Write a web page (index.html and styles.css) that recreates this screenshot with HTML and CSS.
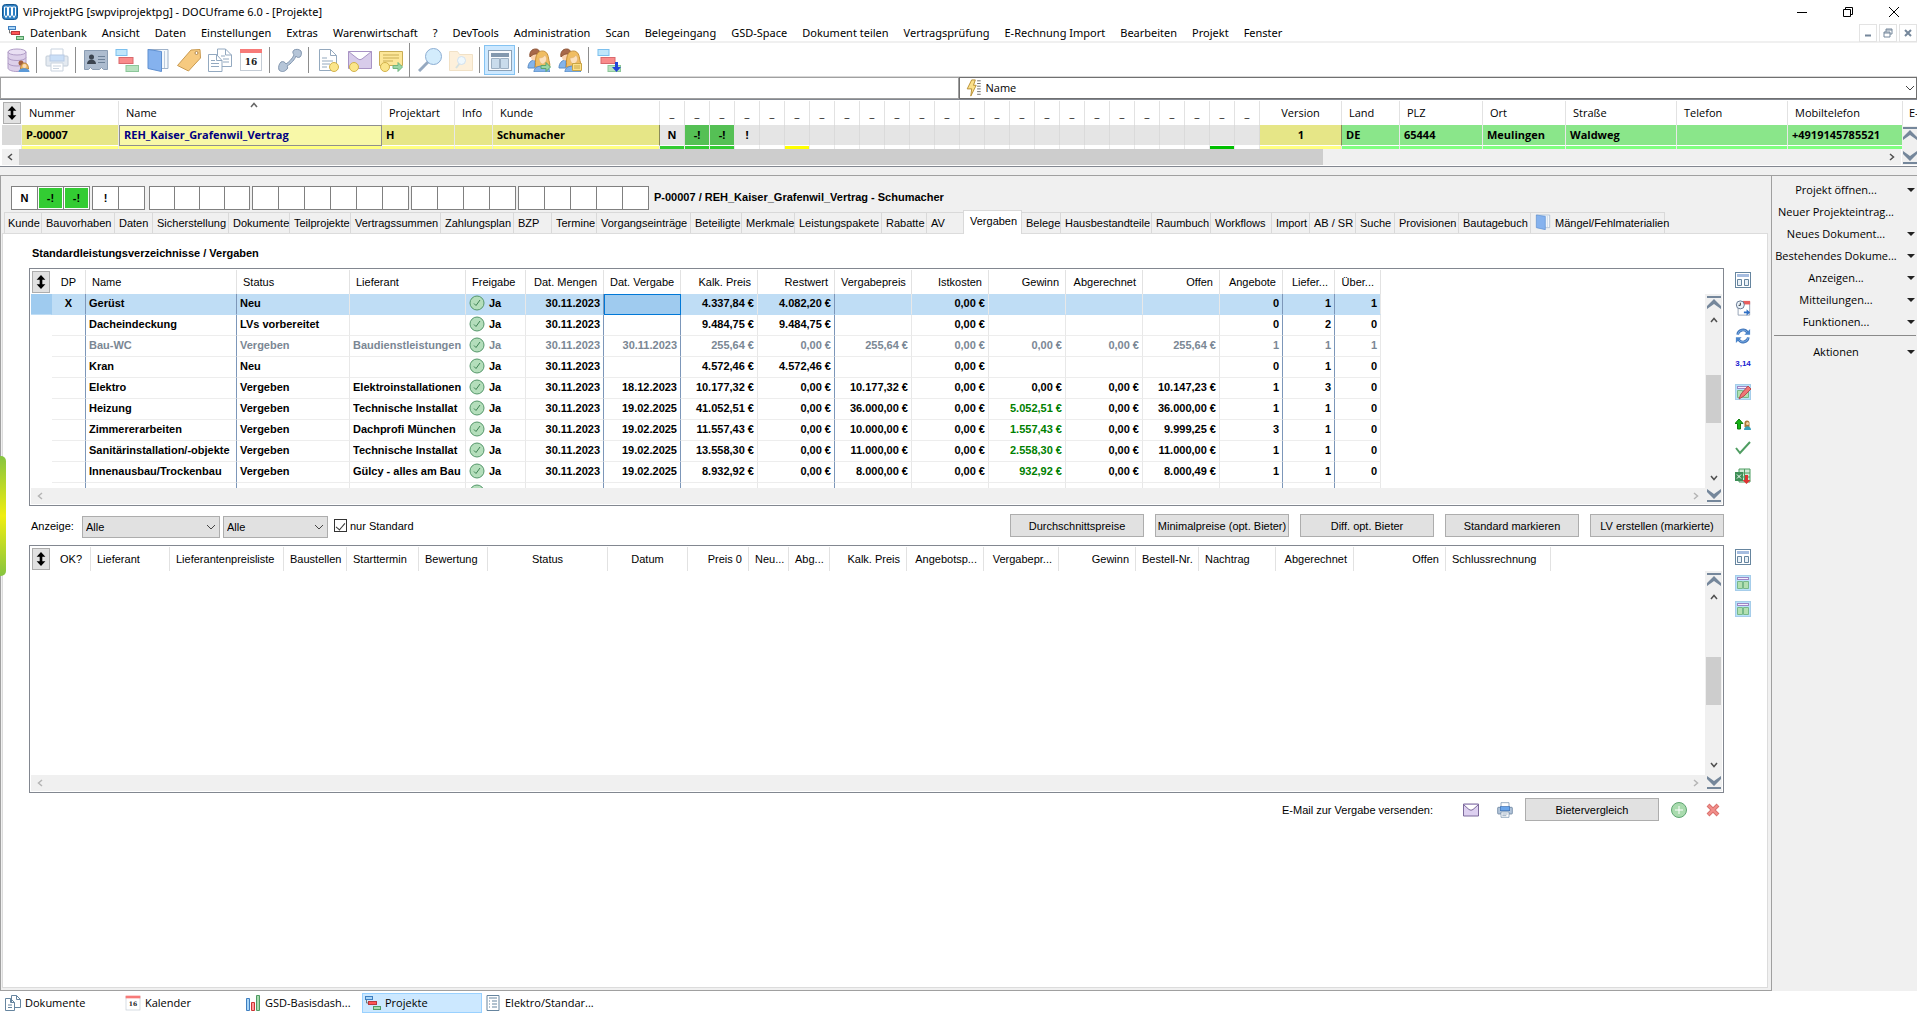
FILE: index.html
```html
<!DOCTYPE html>
<html lang="de">
<head>
<meta charset="utf-8">
<title>ViProjektPG [swpviprojektpg] - DOCUframe 6.0 - [Projekte]</title>
<link rel="stylesheet" href="styles.css">
</head>
<body>
<svg class="sprite" aria-hidden="true">
  <symbol id="i-app" viewBox="0 0 16 16"><rect x=".5" y=".5" width="15" height="15" rx="3" fill="#2e7fc2" stroke="#14568f"/><path d="M2.500 3h3v8l-1.500 2.500L2.500 11zM6.500 3h3v8L8 13.500 6.500 11zM10.500 3h3v8L12 13.500 10.500 11z" fill="#2e7fc2" stroke="#fff" stroke-width="1"/></symbol>
  <symbol id="i-gantt" viewBox="0 0 24 24"><rect x="1" y="1.500" width="11" height="6" fill="#bfe6fb" stroke="#7cc0ee"/><rect x="4" y="9.500" width="14" height="6" fill="#f98b8b" stroke="#d9696d"/><rect x="11" y="17.500" width="12.500" height="6" fill="#b7e2bf" stroke="#8cc79a"/></symbol>
  <symbol id="i-gantts" viewBox="0 0 16 16"><rect x=".5" y="1.500" width="7" height="3" fill="#a9d6f8" stroke="#3f7fc0"/><path d="M1.500 5v3h2" fill="none" stroke="#777"/><rect x="3.500" y="6.500" width="8" height="3" fill="#f55" stroke="#b8383c"/><rect x="8.500" y="11.500" width="7" height="3" fill="#a6dcae" stroke="#4f9a63"/></symbol>
  <symbol id="i-people" viewBox="0 0 24 24"><path d="M1 20c0-5 3-8 7-8v8z" fill="#84b4ea" stroke="#5a8cc4"/><circle cx="7.500" cy="9" r="3.500" fill="#fbd3b0"/><path d="M3 9c-1-5 2-8 5.500-8S13 3 12 7C9 5 6 6 3 9z" fill="#a8694a" stroke="#8d5335"/><path d="M8 19c1-2 0-6 1-10 1-4 3-6 6.500-6S21 6 21.500 10s2 6 1 9z" fill="#f0bd62" stroke="#c48d38"/><path d="M12 10c3 0 5-1 6-3 1 2 2 3 1.500 5S17 16 15.500 16 12 13 12 10z" fill="#fde0bc" stroke="#d9a86a" stroke-width=".5"/><path d="M7 24c0-4 3-6 8.500-6s7 2 7 6z" fill="#84b4ea" stroke="#5a8cc4"/></symbol>
  <symbol id="i-db" viewBox="0 0 24 24"><path d="M2 4v16c0 2 4 3.500 9 3.500s9-1.500 9-3.500V4z" fill="#ddd0ea" stroke="#b09cc6"/><ellipse cx="11" cy="4" rx="9" ry="3" fill="#e9dff3" stroke="#b09cc6"/><path d="M2 9.500c1 4 17 4 18 0M2 15c1 4 17 4 18 0" fill="none" stroke="#b09cc6"/><circle cx="15" cy="15" r="2.500" fill="#a5603e"/><path d="M14.500 21c0-8 8-8 8 0z" fill="#eeb95c" stroke="#b9803a"/><circle cx="18.500" cy="18" r="2" fill="#fbdcb8"/><path d="M12.500 24c0-5 11-5 11 0z" fill="#5c9ad8"/></symbol>
  <symbol id="i-print" viewBox="0 0 24 24"><path d="M6 9V1h12v8" fill="#fff" stroke="#6a87a5"/><rect x="1" y="8" width="22" height="10" rx="1" fill="#b3c5da" stroke="#54718f"/><rect x="5" y="7" width="14" height="6" fill="#6aa5ea" stroke="#3a6fb5"/><path d="M6 15h12v8H6zM8 18h8M8 20.500h6" fill="#fff" stroke="#6a87a5"/></symbol>
  <symbol id="i-card" viewBox="0 0 24 24"><path d="M.5 2.500h23v19h-4l-2-2-2 2h-7l-2-2-2 2h-4z" fill="#adbccf" stroke="#8b9db3"/><circle cx="7.500" cy="9" r="2.500" fill="#3b4450"/><path d="M3 16c0-6 9-6 9 0z" fill="#3b4450"/><path d="M14 8.500h7M14 11.500h7M14 14.500h7" stroke="#6d8198"/></symbol>
  <symbol id="i-book" viewBox="0 0 24 24"><path d="M2 1.500h20v19h-6z" fill="#f4f8fc" stroke="#9fb2c9"/><path d="M18.500 3v17" stroke="#bccbdd"/><path d="M2 1.500l13.500 2v20L2 20.500z" fill="#85b2ee" stroke="#5e8fd0"/></symbol>
  <symbol id="i-tag" viewBox="0 0 24 24"><path d="M14 2l9-.5.5 8.500L11.500 23 .5 17.500z" fill="#f6ca80" stroke="#c99a50"/><circle cx="19.500" cy="5" r="1.500" fill="#fff" stroke="#b08850"/></symbol>
  <symbol id="i-docs" viewBox="0 0 24 24"><g fill="#fff" stroke="#93a9c0"><path d="M9.500 1h8l6 6v11.500h-14z"/><path d="M17.500 1v6h6" fill="none"/><path d="M13 8h4M15 11h6M15 14h6"/><path d="M.5 6.500h8l5.500 6v11H.5z"/><path d="M8.500 6.500v6h5.500" fill="none"/><path d="M3 12.500h4M3 15.500h8M3 18.500h8"/></g></symbol>
  <symbol id="i-cal" viewBox="0 0 24 24"><rect x="1.500" y="2" width="21" height="20.500" fill="#fff" stroke="#c4ccd5"/><path d="M1 1h22v4H1z" fill="#f77a78"/><text x="12" y="17" text-anchor="middle" class="cal-num">16</text></symbol>
  <symbol id="i-phone" viewBox="0 0 24 24"><path d="M1 22c-1-3 0-6 2-8 2-1 4 0 5 2 3-2 6-5 8-9-1-2-2-3 0-5 2-1 5-1 7 1 1 3 0 5-1 6-2 1-4 0-4-1-1 3-5 8-9 10 1 1 1 3-1 4-2 2-5 2-7 0z" fill="#b5c5d8" stroke="#8296af"/></symbol>
  <symbol id="i-doccoin" viewBox="0 0 24 24"><path d="M2.500 1.500h11l6 6v15h-17zM13.500 1.500v6h6M5 10h5M5 13h11M5 16h8M5 19h5" fill="#fff" stroke="#94a9be"/><circle cx="17" cy="19" r="4.500" fill="#fbe68b" stroke="#d2b24c"/></symbol>
  <symbol id="i-mailcoin" viewBox="0 0 24 24"><path d="M.5 3.500h23v17H.5zM.5 3.500L10 11q2 1.500 4 0l9.500-7.500" fill="#d8ccea" stroke="#a893c4"/><circle cx="6" cy="19" r="4.500" fill="#fbe68b" stroke="#d2b24c"/></symbol>
  <symbol id="i-notecoin" viewBox="0 0 24 24"><path d="M.5 3.500h23v14H.5zM4 7h16M4 10h16M4 13h10" fill="#fde799" stroke="#c9ad55"/><circle cx="6" cy="19" r="4.500" fill="#fbe68b" stroke="#d2b24c"/><path d="M14 17.500h5v-3l4.500 4.500-4.500 4.500v-3h-5z" fill="#9bd6a6" stroke="#6fb57e"/></symbol>
  <symbol id="i-lens" viewBox="0 0 24 24"><path d="M10 14L1 23" stroke="#96a9c0" stroke-width="3"/><circle cx="15.500" cy="8.500" r="8" fill="#d3ecfc" stroke="#8cadd2"/></symbol>
  <symbol id="i-folder" viewBox="0 0 24 24"><path d="M.5 3.500h8l2 3h13v16H.500z" fill="#fad79a" stroke="#d9aa5e"/><path d="M11 15l-4 5" stroke="#8aa" stroke-width="2"/><circle cx="12.500" cy="12.500" r="4" fill="#d3ecfc" stroke="#7ea9cf"/></symbol>
  <symbol id="i-form" viewBox="0 0 24 24"><rect x=".5" y="2.500" width="23" height="20" fill="#f7fafd" stroke="#8ba1b6"/><path d="M3 5h18v4H3z" fill="#8298ae"/><path d="M3.500 10.500h8v10h-8zM12.500 10.500h8v10h-8z" fill="#c9dcec" stroke="#9cb0c3"/></symbol>
  <symbol id="i-forms" viewBox="0 0 16 16"><rect x=".5" y=".5" width="15" height="15" fill="#fff" stroke="#66859f"/><path d="M2 2h12v3H2z" fill="#a6bde0"/><path d="M2.500 7.500h4v6h-4zM9.500 7.500h4v6h-4z" fill="#eaf1f7" stroke="#66859f"/></symbol>
  <symbol id="i-formg" viewBox="0 0 16 16"><rect x=".5" y=".5" width="15" height="15" fill="#b9e2f8" stroke="#a6cdea"/><rect x="2.500" y="2.500" width="11" height="2" fill="#f7effc" stroke="#9c86c4"/><path d="M2.500 6.500h5v7h-5zM8.500 6.500h5v7h-5z" fill="#b3e0b1" stroke="#77b98a"/></symbol>
  <symbol id="i-bolt" viewBox="0 0 16 20"><path d="M6 1h4L8 7h3L5 19l1-8H1z" fill="#fbe08a" stroke="#b48a2c"/><path d="M12 2h4M12 5h4M12 8h4M12 11h4M12 14h4M12 17h4" stroke="#666"/></symbol>
  <symbol id="i-sort" viewBox="0 0 12 16"><path d="M6 0l5 5.500H7.500v5H11L6 16l-5-5.500h3.500v-5H1z" fill="#000"/></symbol>
  <symbol id="i-ok" viewBox="0 0 16 16"><circle cx="8" cy="8" r="7" fill="#b4debb" stroke="#55976a"/><path d="M5 8.500l2 2 4-5.500" fill="none" stroke="#3f8254"/></symbol>
  <symbol id="i-top" viewBox="0 0 16 16"><path d="M1 1h14v2H1z" fill="#75879b"/><path d="M1 14v-3l7-7 7 7v3l-7-5z" fill="#75879b"/></symbol>
  <symbol id="i-bottom" viewBox="0 0 16 16"><path d="M1 13h14v2H1z" fill="#75879b"/><path d="M1 2v3l7 7 7-7V2L8 7z" fill="#75879b"/></symbol>
  <symbol id="i-chev" viewBox="0 0 8 8"><path d="M1 2l3 3.500L7 2" fill="none" stroke="currentColor" stroke-width="1.500"/></symbol>
  <symbol id="i-drop" viewBox="0 0 10 10"><path d="M1 3l4 4 4-4" fill="none" stroke="#444"/></symbol>
  <symbol id="i-sched" viewBox="0 0 16 18"><path d="M2.500 2h13v15h-13z" fill="#fff" stroke="#8c9bb0"/><path d="M8 1h8v4H8z" fill="#e85d5d"/><circle cx="5" cy="5.500" r="4.500" fill="#eaf3fb" stroke="#5a6c88"/><path d="M5 3v3H3" fill="none" stroke="#222"/><path d="M9 13h3v-2.500l4 3.500-4 3.500V15H9z" fill="#2f6fc4"/></symbol>
  <symbol id="i-sync" viewBox="0 0 16 18"><path d="M2 7.500a6 6 0 0 1 11-2.500M14 10.500a6 6 0 0 1-11 2.500" fill="none" stroke="#3f74b8" stroke-width="3"/><path d="M2 7.500a6 6 0 0 1 11-2.500M14 10.500a6 6 0 0 1-11 2.500" fill="none" stroke="#7fb2ea"/><path d="M9.500 7.500H16V1zM6.500 10.500H0V17z" fill="#4b86cc"/></symbol>
  <symbol id="i-edit" viewBox="0 0 16 16"><use href="#i-formg"/><path d="M4 15l2-5 7-8 3 3-7 7z" fill="#f07575" stroke="#b84a52"/></symbol>
  <symbol id="i-upuser" viewBox="0 0 16 12"><path d="M4 1l4 4.500H5.500V11h-3V5.500H0z" fill="#14b514" stroke="#0b7d0b"/><path d="M9.500 9V5a2.500 2.500 0 0 1 5 0v4z" fill="#a87838"/><circle cx="12.500" cy="5.500" r="1.500" fill="#f6cfa0"/><path d="M9 12c0-5 7-5 7 0z" fill="#38a0b8"/></symbol>
  <symbol id="i-check" viewBox="0 0 16 14"><path d="M1 7l4 5L15 1" fill="none" stroke="#4f9d62" stroke-width="2"/></symbol>
  <symbol id="i-xls" viewBox="0 0 16 16"><path d="M4 1h11v13H4zM4 5h11M4 9h11M9.500 1v13" fill="#cfead5" stroke="#4f9d62"/><path d="M0 4h8v9H0z" fill="#3f8f58"/><path d="M2 6.500l4 4M6 6.500l-4 4" stroke="#fff"/><path d="M10 7h3v5h2.500l-4 4-4-4H10z" fill="#d33"/></symbol>
  <symbol id="i-mail" viewBox="0 0 16 14"><path d="M.5 1h15v12H.5zM1 2l5 4.500q2 1.500 4 0L15 2" fill="#ddd0f0" stroke="#7d6a9c"/></symbol>
  <symbol id="i-plus" viewBox="0 0 16 16"><circle cx="8" cy="8" r="7.500" fill="#a9dbae" stroke="#5fa572"/><path d="M8 4v8M4 8h8" stroke="#fff"/></symbol>
  <symbol id="i-del" viewBox="0 0 16 16"><path d="M3 3l10 10M13 3L3 13" stroke="#d9706c" stroke-width="4"/><path d="M3.500 3.500l9 9M12.500 3.500l-9 9" stroke="#f28f8b" stroke-width="2"/></symbol>
  <symbol id="i-bars" viewBox="0 0 16 16"><path d="M1.500 3.500h3v12h-3z" fill="#a9d6f8" stroke="#3f7fc0"/><path d="M6.500 7.500h3v8h-3z" fill="#f99" stroke="#c33"/><path d="M11.500.5h3v15h-3z" fill="#a6dcae" stroke="#4f9a63"/></symbol>
  <symbol id="i-lines" viewBox="0 0 16 16"><path d="M2 .5h12v15H2zM4 3h8M4 6h1M7 6h5M4 9h1M7 9h5M4 12h1M7 12h5" fill="#fff" stroke="#66859f"/></symbol>
  <symbol id="i-pages" viewBox="0 0 16 16"><g fill="#fff" stroke="#66859f"><path d="M6.500.5h5l4 4v8h-9zM11.500.5v4h4"/><path d="M.5 3.500h5l4 4v8h-9zM5.500 3.500v4h4M3 10h4M3 12.500h4"/></g></symbol>
</svg>

<header class="titlebar">
  <svg class="ic16"><use href="#i-app"/></svg>
  <h1>ViProjektPG [swpviprojektpg] - DOCUframe 6.0 - [Projekte]</h1>
  <div class="winctl">
    <button aria-label="Minimieren"><svg viewBox="0 0 12 12"><path d="M1 6.500h10" stroke="#000"/></svg></button>
    <button aria-label="Wiederherstellen"><svg viewBox="0 0 12 12"><path d="M1.500 3.500h7v7h-7zM3.500 3.500v-2h7v7h-2" fill="none" stroke="#000"/></svg></button>
    <button aria-label="Schließen"><svg viewBox="0 0 12 12"><path d="M1 1l10 10M11 1L1 11" stroke="#000"/></svg></button>
  </div>
</header>

<nav class="menubar">
  <svg class="ic16"><use href="#i-gantts"/></svg>
  <ul>
    <li><a href="#">Datenbank</a></li><li><a href="#">Ansicht</a></li><li><a href="#">Daten</a></li><li><a href="#">Einstellungen</a></li><li><a href="#">Extras</a></li><li><a href="#">Warenwirtschaft</a></li><li><a href="#">?</a></li><li><a href="#">DevTools</a></li><li><a href="#">Administration</a></li><li><a href="#">Scan</a></li><li><a href="#">Belegeingang</a></li><li><a href="#">GSD-Space</a></li><li><a href="#">Dokument teilen</a></li><li><a href="#">Vertragsprüfung</a></li><li><a href="#">E-Rechnung Import</a></li><li><a href="#">Bearbeiten</a></li><li><a href="#">Projekt</a></li><li><a href="#">Fenster</a></li>
  </ul>
  <div class="mdictl">
    <button aria-label="Fenster minimieren"><svg viewBox="0 0 10 10"><path d="M2 7.500h6" stroke="#75879b" stroke-width="2"/></svg></button>
    <button aria-label="Fenster wiederherstellen"><svg viewBox="0 0 10 10"><path d="M3 4V1h6v5H7M1 4h6v5H1zM1 5h6M3 2h6" fill="none" stroke="#75879b"/></svg></button>
    <button aria-label="Fenster schließen"><svg viewBox="0 0 10 10"><path d="M2 2l6 6M8 2L2 8" stroke="#75879b" stroke-width="2"/></svg></button>
  </div>
</nav>

<div class="toolbar">
  <button aria-label="Datenbank"><svg><use href="#i-db"/></svg></button><i></i>
  <button aria-label="Drucken" disabled><svg><use href="#i-print"/></svg></button><i></i>
  <button aria-label="Adressen"><svg><use href="#i-card"/></svg></button>
  <button aria-label="Projekte"><svg><use href="#i-gantt"/></svg></button>
  <button aria-label="Buch"><svg><use href="#i-book"/></svg></button>
  <button aria-label="Artikel"><svg><use href="#i-tag"/></svg></button>
  <button aria-label="Dokumente"><svg><use href="#i-docs"/></svg></button>
  <button aria-label="Kalender"><svg><use href="#i-cal"/></svg></button><i></i>
  <button aria-label="Telefon"><svg><use href="#i-phone"/></svg></button><i></i>
  <button aria-label="Neues Dokument"><svg><use href="#i-doccoin"/></svg></button>
  <button aria-label="Neue E-Mail"><svg><use href="#i-mailcoin"/></svg></button>
  <button aria-label="Neue Notiz"><svg><use href="#i-notecoin"/></svg></button><i class="tall"></i>
  <button aria-label="Suchen"><svg><use href="#i-lens"/></svg></button>
  <button aria-label="Ordner durchsuchen" disabled><svg><use href="#i-folder"/></svg></button><i></i>
  <button class="on" aria-label="Detailansicht"><svg><use href="#i-form"/></svg></button><i></i>
  <button aria-label="Benutzer wechseln"><svg><use href="#i-people"/><path d="M14 17.500h5v-3l4.500 4.500-4.500 4.500v-3h-5z" fill="#9bd6a6" stroke="#5ba56c"/></svg></button>
  <button aria-label="Benutzernotiz"><svg><use href="#i-people"/><path d="M14.500 15.500h9v7h-9zM16 18h6M16 20h6" fill="#fde08a" stroke="#c9a545"/></svg></button><i></i>
  <button aria-label="Projekt laden"><svg><use href="#i-gantt"/><path d="M18 14h3v5h3l-4.500 5L15 19h3z" fill="#2343d8"/></svg></button>
</div>

<div class="searchbar">
  <input type="text" aria-label="Suchbegriff">
  <div class="sortby"><svg class="bolt"><use href="#i-bolt"/></svg><select aria-label="Suchfeld"><option>Name</option></select><svg class="ic10"><use href="#i-drop"/></svg></div>
</div>

<section class="projects">
  <table class="grid">
    <colgroup><col class="w20"><col class="w97"><col class="w263"><col class="w73"><col class="w38"><col class="w167"><col class="w25" span="24"><col class="w82"><col class="w58"><col class="w83"><col class="w83"><col class="w111"><col class="w111"><col class="w115"><col class="w83"></colgroup>
    <thead><tr><th class="corner"><button aria-label="Sortieren"><svg><use href="#i-sort"/></svg></button></th><th>Nummer</th><th class="sorted">Name<svg class="ic8 caret"><use href="#i-chev"/></svg></th><th>Projektart</th><th>Info</th><th>Kunde</th><th class="d">_</th><th class="d">_</th><th class="d">_</th><th class="d">_</th><th class="d">_</th><th class="d">_</th><th class="d">_</th><th class="d">_</th><th class="d">_</th><th class="d">_</th><th class="d">_</th><th class="d">_</th><th class="d">_</th><th class="d">_</th><th class="d">_</th><th class="d">_</th><th class="d">_</th><th class="d">_</th><th class="d">_</th><th class="d">_</th><th class="d">_</th><th class="d">_</th><th class="d">_</th><th class="d">_</th><th class="c">Version</th><th>Land</th><th>PLZ</th><th>Ort</th><th>Straße</th><th>Telefon</th><th>Mobiltelefon</th><th>E-Mail</th></tr></thead>
    <tbody>
      <tr><td class="rh"></td><td class="y">P-00007</td><td class="cur">REH_Kaiser_Grafenwil_Vertrag</td><td class="y">H</td><td class="y"></td><td class="y k">Schumacher</td><td class="s">N</td><td class="s g">-!</td><td class="s g">-!</td><td class="s">!</td><td class="s"></td><td class="s"></td><td class="s"></td><td class="s"></td><td class="s"></td><td class="s"></td><td class="s"></td><td class="s"></td><td class="s"></td><td class="s"></td><td class="s"></td><td class="s"></td><td class="s"></td><td class="s"></td><td class="s"></td><td class="s"></td><td class="s"></td><td class="s"></td><td class="s"></td><td class="s"></td><td class="y c k">1</td><td class="a">DE</td><td class="a">65444</td><td class="a">Meulingen</td><td class="a">Waldweg</td><td class="a"></td><td class="a">+4919145785521</td><td></td></tr>
      <tr class="next"><td></td><td class="y"></td><td class="y"></td><td class="y"></td><td class="y"></td><td class="y"></td><td class="g"></td><td class="g"></td><td class="g"></td><td></td><td></td><td class="yy"></td><td></td><td></td><td></td><td></td><td></td><td></td><td></td><td></td><td></td><td></td><td></td><td></td><td></td><td></td><td></td><td></td><td class="gg"></td><td></td><td class="y"></td><td class="a"></td><td class="a"></td><td class="a"></td><td class="a"></td><td class="a"></td><td class="a"></td><td></td></tr>
    </tbody>
  </table>
  <div class="hscroll live"><svg class="ic8 left"><use href="#i-chev"/></svg><b></b><svg class="ic8 right"><use href="#i-chev"/></svg></div>
  <div class="jump"><svg class="ic16"><use href="#i-top"/></svg><svg class="ic16"><use href="#i-bottom"/></svg></div>
</section>

<main class="detail">
  <div class="sidegrip"></div>
  <section class="project">
    <div class="flags">
      <div class="fg"><span>N</span><span class="g">-!</span><span class="g">-!</span></div>
      <div class="fg"><span>!</span><span></span></div>
      <div class="fg wide"><span></span><span></span><span></span><span></span></div>
      <div class="fg"><span></span><span></span><span></span><span></span><span></span><span></span></div>
      <div class="fg"><span></span><span></span><span></span><span></span></div>
      <div class="fg"><span></span><span></span><span></span><span></span><span></span></div>
      <h2>P-00007 / REH_Kaiser_Grafenwil_Vertrag - Schumacher</h2>
    </div>
    <nav class="tabs">
      <a href="#">Kunde</a><a href="#">Bauvorhaben</a><a href="#">Daten</a><a href="#">Sicherstellung</a><a href="#">Dokumente</a><a href="#">Teilprojekte</a><a href="#">Vertragssummen</a><a href="#">Zahlungsplan</a><a href="#">BZP</a><a href="#">Termine</a><a href="#">Vorgangseinträge</a><a href="#">Beteiligte</a><a href="#">Merkmale</a><a href="#">Leistungspakete</a><a href="#">Rabatte</a><a href="#">AV</a><a href="#" class="on">Vergaben</a><a href="#">Belege</a><a href="#">Hausbestandteile</a><a href="#">Raumbuch</a><a href="#">Workflows</a><a href="#">Import</a><a href="#">AB / SR</a><a href="#">Suche</a><a href="#">Provisionen</a><a href="#">Bautagebuch</a><a href="#"><svg class="ic16"><use href="#i-book"/></svg>Mängel/Fehlmaterialien</a>
    </nav>
    <div class="page">
      <h3>Standardleistungsverzeichnisse / Vergaben</h3>
      <div class="split">
        <div class="list">
          <div class="view upper">
            <table class="grid awards">
              <colgroup><col class="w21"><col class="w34"><col class="w151"><col class="w113"><col class="w116"><col class="w60"><col class="w78"><col class="w77" span="8"><col class="w63"><col class="w52"><col class="w46"></colgroup>
              <thead><tr><th class="corner"><button aria-label="Sortieren"><svg><use href="#i-sort"/></svg></button></th><th class="c">DP</th><th>Name</th><th>Status</th><th>Lieferant</th><th>Freigabe</th><th>Dat. Mengen</th><th>Dat. Vergabe</th><th>Kalk. Preis</th><th>Restwert</th><th>Vergabepreis</th><th>Istkosten</th><th>Gewinn</th><th>Abgerechnet</th><th>Offen</th><th>Angebote</th><th>Liefer...</th><th>Über...</th></tr></thead>
              <tbody>
                <tr class="sel"><td></td><td>X</td><td>Gerüst</td><td>Neu</td><td></td><td><svg class="ic16"><use href="#i-ok"/></svg>Ja</td><td>30.11.2023</td><td class="focus"></td><td>4.337,84 €</td><td>4.082,20 €</td><td></td><td>0,00 €</td><td></td><td></td><td></td><td>0</td><td>1</td><td>1</td></tr>
                <tr><td></td><td></td><td>Dacheindeckung</td><td>LVs vorbereitet</td><td></td><td><svg class="ic16"><use href="#i-ok"/></svg>Ja</td><td>30.11.2023</td><td></td><td>9.484,75 €</td><td>9.484,75 €</td><td></td><td>0,00 €</td><td></td><td></td><td></td><td>0</td><td>2</td><td>0</td></tr>
                <tr class="off"><td></td><td></td><td>Bau-WC</td><td>Vergeben</td><td><span>Baudienstleistungen</span></td><td><svg class="ic16"><use href="#i-ok"/></svg>Ja</td><td>30.11.2023</td><td>30.11.2023</td><td>255,64 €</td><td>0,00 €</td><td>255,64 €</td><td>0,00 €</td><td>0,00 €</td><td>0,00 €</td><td>255,64 €</td><td>1</td><td>1</td><td>1</td></tr>
                <tr><td></td><td></td><td>Kran</td><td>Neu</td><td></td><td><svg class="ic16"><use href="#i-ok"/></svg>Ja</td><td>30.11.2023</td><td></td><td>4.572,46 €</td><td>4.572,46 €</td><td></td><td>0,00 €</td><td></td><td></td><td></td><td>0</td><td>1</td><td>0</td></tr>
                <tr><td></td><td></td><td>Elektro</td><td>Vergeben</td><td><span>Elektroinstallationen</span></td><td><svg class="ic16"><use href="#i-ok"/></svg>Ja</td><td>30.11.2023</td><td>18.12.2023</td><td>10.177,32 €</td><td>0,00 €</td><td>10.177,32 €</td><td>0,00 €</td><td>0,00 €</td><td>0,00 €</td><td>10.147,23 €</td><td>1</td><td>3</td><td>0</td></tr>
                <tr><td></td><td></td><td>Heizung</td><td>Vergeben</td><td><span>Technische Installat</span></td><td><svg class="ic16"><use href="#i-ok"/></svg>Ja</td><td>30.11.2023</td><td>19.02.2025</td><td>41.052,51 €</td><td>0,00 €</td><td>36.000,00 €</td><td>0,00 €</td><td class="plus">5.052,51 €</td><td>0,00 €</td><td>36.000,00 €</td><td>1</td><td>1</td><td>0</td></tr>
                <tr><td></td><td></td><td>Zimmererarbeiten</td><td>Vergeben</td><td><span>Dachprofi München</span></td><td><svg class="ic16"><use href="#i-ok"/></svg>Ja</td><td>30.11.2023</td><td>19.02.2025</td><td>11.557,43 €</td><td>0,00 €</td><td>10.000,00 €</td><td>0,00 €</td><td class="plus">1.557,43 €</td><td>0,00 €</td><td>9.999,25 €</td><td>3</td><td>1</td><td>0</td></tr>
                <tr><td></td><td></td><td><span>Sanitärinstallation/-objekte</span></td><td>Vergeben</td><td><span>Technische Installat</span></td><td><svg class="ic16"><use href="#i-ok"/></svg>Ja</td><td>30.11.2023</td><td>19.02.2025</td><td>13.558,30 €</td><td>0,00 €</td><td>11.000,00 €</td><td>0,00 €</td><td class="plus">2.558,30 €</td><td>0,00 €</td><td>11.000,00 €</td><td>1</td><td>1</td><td>0</td></tr>
                <tr><td></td><td></td><td><span>Innenausbau/Trockenbau</span></td><td>Vergeben</td><td><span>Gülcy - alles am Bau</span></td><td><svg class="ic16"><use href="#i-ok"/></svg>Ja</td><td>30.11.2023</td><td>19.02.2025</td><td>8.932,92 €</td><td>0,00 €</td><td>8.000,00 €</td><td>0,00 €</td><td class="plus">932,92 €</td><td>0,00 €</td><td>8.000,49 €</td><td>1</td><td>1</td><td>0</td></tr>
                <tr><td></td><td></td><td></td><td></td><td></td><td><svg class="ic16"><use href="#i-ok"/></svg></td><td></td><td></td><td></td><td></td><td></td><td></td><td></td><td></td><td></td><td></td><td></td><td></td></tr>
              </tbody>
            </table>
          </div>
          <div class="vscroll"><svg class="ic16"><use href="#i-top"/></svg><svg class="ic8 up"><use href="#i-chev"/></svg><div class="track"><b></b></div><svg class="ic8"><use href="#i-chev"/></svg><svg class="ic16"><use href="#i-bottom"/></svg></div>
          <div class="hscroll"><svg class="ic8 left"><use href="#i-chev"/></svg><svg class="ic8 right"><use href="#i-chev"/></svg></div>
        </div>
        <div class="tools">
          <button aria-label="Ansicht"><svg><use href="#i-forms"/></svg></button>
          <button aria-label="Termin"><svg><use href="#i-sched"/></svg></button>
          <button aria-label="Aktualisieren"><svg><use href="#i-sync"/></svg></button>
          <button class="pi">3,14</button>
          <button aria-label="Bearbeiten"><svg><use href="#i-edit"/></svg></button>
          <button aria-label="Lieferant zuordnen" class="low"><svg><use href="#i-upuser"/></svg></button>
          <button aria-label="Freigeben"><svg><use href="#i-check"/></svg></button>
          <button aria-label="Excel-Export"><svg><use href="#i-xls"/></svg></button>
        </div>
      </div>
      <div class="filters">
        <label for="f1">Anzeige:</label>
        <span class="combo first"><select id="f1"><option>Alle</option></select><svg class="ic10"><use href="#i-drop"/></svg></span>
        <span class="combo"><select aria-label="Status"><option>Alle</option></select><svg class="ic10"><use href="#i-drop"/></svg></span>
        <label class="chk"><input type="checkbox" checked>nur Standard</label>
        <div class="actions"><button class="btn">Durchschnittspreise</button><button class="btn">Minimalpreise (opt. Bieter)</button><button class="btn">Diff. opt. Bieter</button><button class="btn">Standard markieren</button><button class="btn">LV erstellen (markierte)</button></div>
      </div>
      <div class="split">
        <div class="list">
          <div class="view lower">
            <table class="grid bids">
              <colgroup><col class="w21"><col class="w39"><col class="w79"><col class="w114"><col class="w63"><col class="w72"><col class="w69"><col class="w120"><col class="w80"><col class="w61"><col class="w40"><col class="w41"><col class="w77"><col class="w77"><col class="w75"><col class="w77"><col class="w63"><col class="w77"><col class="w78"><col class="w92"><col class="w105"></colgroup>
              <thead><tr><th class="corner"><button aria-label="Sortieren"><svg><use href="#i-sort"/></svg></button></th><th class="c">OK?</th><th>Lieferant</th><th>Lieferantenpreisliste</th><th>Baustellen</th><th>Starttermin</th><th>Bewertung</th><th class="c">Status</th><th class="c">Datum</th><th class="r">Preis 0</th><th>Neu...</th><th>Abg...</th><th class="r">Kalk. Preis</th><th class="r">Angebotsp...</th><th class="r">Vergabepr...</th><th class="r">Gewinn</th><th>Bestell-Nr.</th><th>Nachtrag</th><th class="r">Abgerechnet</th><th class="r">Offen</th><th>Schlussrechnung</th></tr></thead>
            </table>
          </div>
          <div class="vscroll"><svg class="ic16"><use href="#i-top"/></svg><svg class="ic8 up"><use href="#i-chev"/></svg><div class="track"><b></b></div><svg class="ic8"><use href="#i-chev"/></svg><svg class="ic16"><use href="#i-bottom"/></svg></div>
          <div class="hscroll"><svg class="ic8 left"><use href="#i-chev"/></svg><svg class="ic8 right"><use href="#i-chev"/></svg></div>
        </div>
        <div class="tools tight">
          <button aria-label="Ansicht"><svg><use href="#i-forms"/></svg></button>
          <button aria-label="Ansicht laden"><svg><use href="#i-formg"/></svg></button>
          <button aria-label="Ansicht speichern"><svg><use href="#i-formg"/></svg></button>
        </div>
      </div>
      <div class="mailrow">
        <span>E-Mail zur Vergabe versenden:</span>
        <div class="pair">
          <button aria-label="E-Mail"><svg><use href="#i-mail"/></svg></button>
          <button aria-label="Drucken"><svg><use href="#i-print"/></svg></button>
        </div>
        <button class="btn">Bietervergleich</button>
        <div class="pair">
          <button aria-label="Hinzufügen"><svg><use href="#i-plus"/></svg></button>
          <button aria-label="Entfernen"><svg><use href="#i-del"/></svg></button>
        </div>
      </div>
    </div>
  </section>
  <aside class="commands">
    <button class="dd">Projekt öffnen...</button>
    <button>Neuer Projekteintrag...</button>
    <button class="dd">Neues Dokument...</button>
    <button class="dd">Bestehendes Dokume...</button>
    <button class="dd">Anzeigen...</button>
    <button class="dd">Mitteilungen...</button>
    <button class="dd">Funktionen...</button>
    <hr>
    <button class="dd">Aktionen</button>
  </aside>
</main>

<footer class="taskbar">
  <button><svg class="ic16"><use href="#i-pages"/></svg>Dokumente</button>
  <button><svg class="ic16"><use href="#i-cal"/></svg>Kalender</button>
  <button><svg class="ic16"><use href="#i-bars"/></svg>GSD-Basisdash...</button>
  <button class="on"><svg class="ic16"><use href="#i-gantts"/></svg>Projekte</button>
  <button><svg class="ic16"><use href="#i-lines"/></svg>Elektro/Standar...</button>
</footer>
</body>
</html>
```
FILE: styles.css
```css
* { box-sizing: border-box; }
body {
  margin: 0;
  min-height: 100vh;
  display: flex;
  flex-direction: column;
  background: #fff;
  color: #000;
  font: 11px/16px "Open Sans", "Noto Sans", sans-serif;
  white-space: nowrap;
  overflow-x: hidden;
}
button, select, input { font: inherit; color: inherit; }
button { border: 0; padding: 0; background: none; }
a { color: inherit; text-decoration: none; }
h1, h2, h3 { margin: 0; font-size: 11px; }
svg { display: block; flex: none; }
.sprite { position: absolute; width: 0; height: 0; }
.cal-num { font: bold 9px "DejaVu Serif", serif; fill: #222; }
.ic16 { width: 16px; height: 16px; }
.ic10 { width: 10px; height: 10px; }
.ic8 { width: 8px; height: 8px; }

/* Title and menu */
.titlebar { display: flex; align-items: center; height: 24px; padding-left: 2px; gap: 5px; font-family: "Noto Sans", sans-serif; }
.titlebar h1 { flex: 1; font-weight: normal; }
.winctl { display: flex; }
.winctl button { width: 46px; display: grid; place-items: center; }
.winctl svg { width: 12px; height: 12px; }
.menubar { display: flex; align-items: center; height: 19px; padding-left: 8px; border-bottom: 2px solid #f0f0f0; font-family: "Noto Sans", sans-serif; }
.menubar ul { flex: 1; display: flex; gap: 15px; margin: 0; padding: 0 0 0 6px; list-style: none; }
.mdictl { display: flex; gap: 2px; }
.mdictl button { width: 18px; height: 18px; border: 1px solid #e3e3e3; display: grid; place-items: center; }
.mdictl svg { width: 10px; height: 10px; }

/* Toolbar */
.toolbar { display: flex; align-items: center; height: 34px; padding-left: 2px; border-bottom: 1px solid #d8d8d8; }
.toolbar button { width: 31px; height: 30px; display: grid; place-items: center; border: 1px solid transparent; }
.toolbar button.on { background: #cce8ff; border-color: #84c3f2; }
.toolbar button:disabled { opacity: .35; }
.toolbar svg { width: 24px; height: 24px; }
.toolbar i { width: 1px; height: 26px; margin: 0 4px 0 3px; background: #8d8d8d; }
.toolbar i.tall { height: 34px; }

.searchbar { display: grid; grid-template-columns: 1fr 1fr; height: 22px; }
.searchbar input { border: 1px solid #a0a0a0; padding: 0 4px; min-width: 0; outline: 0; }
.sortby { display: flex; align-items: center; border: 1px solid #707070; padding: 0 1px 0 5px; }
.sortby select { flex: 1; appearance: none; border: 0; padding: 0 4px; background: none; }
.bolt { width: 17px; height: 18px; }

/* Data grids */
.grid { width: 1px; table-layout: fixed; border-collapse: separate; border-spacing: 0; }
.grid th { height: 24px; padding: 0 6px; border-right: 1px solid #e2e2e2; font-weight: normal; text-align: left; overflow: hidden; }
.grid td { height: 21px; padding: 0 3px 2px; border-right: 1px solid #e8e8e8; border-bottom: 1px solid #ededed; font-weight: bold; overflow: hidden; }
.grid .c { text-align: center; }
.grid .r { text-align: right; }
.grid th.corner { padding: 0 1px; border-right: 0; }
.corner button { display: grid; place-items: center; width: 18px; height: 22px; border: 1px solid #adadad; background: #e1e1e1; }
.corner svg { width: 12px; height: 14px; }
.w20 { width: 20px; } .w21 { width: 21px; } .w25 { width: 25px; } .w34 { width: 34px; } .w38 { width: 38px; }
.w39 { width: 39px; } .w40 { width: 40px; } .w41 { width: 41px; } .w46 { width: 46px; } .w52 { width: 52px; }
.w58 { width: 58px; } .w60 { width: 60px; } .w61 { width: 61px; } .w63 { width: 63px; } .w69 { width: 69px; }
.w72 { width: 72px; } .w73 { width: 73px; } .w75 { width: 75px; } .w77 { width: 77px; } .w78 { width: 78px; }
.w79 { width: 79px; } .w80 { width: 80px; } .w82 { width: 82px; } .w83 { width: 83px; } .w92 { width: 92px; }
.w97 { width: 97px; } .w105 { width: 105px; } .w111 { width: 111px; } .w113 { width: 113px; } .w114 { width: 114px; }
.w115 { width: 115px; } .w116 { width: 116px; } .w120 { width: 120px; } .w151 { width: 151px; } .w167 { width: 167px; }
.w263 { width: 263px; }

/* Project list */
.projects { position: relative; height: 68px; padding: 1px 0 0 2px; border: solid #828790; border-width: 1px 0; overflow: hidden; }
.projects th { padding: 0 7px; }
.projects th.d { padding: 0; text-align: center; }
.projects th.sorted { position: relative; }
.projects th:last-child { padding: 0 0 0 6px; }
.caret { position: absolute; top: 0; left: 50%; transform: rotate(180deg); color: #666; }
.projects td { padding: 0 3px 1px 4px; border-bottom-color: #fff; }
.projects td.rh { background: #d9d9d9; }
.projects td.y { background: #e6e687; }
.projects td.k { border-right-color: #8a8a5a; }
.projects td.cur { padding-top: 0; background: #f8f8a8; color: #000080; border: 1px solid #8f8f8f; }
.projects td.s { padding: 0 0 1px; background: #e5e5e5; text-align: center; border-right-color: #dadada; }
.projects td.s.g { background: #55c055; border-right-color: #e5e5e5; }
.projects td.a { background: #8ae68a; }
.projects .next td { height: 3px; padding: 0; border-bottom: 0; }
.projects .next td.y { background: #ffff80; }
.projects .next td.g { background: #33cc33; }
.projects .next td.yy { background: #ff0; }
.projects .next td.gg { background: #00c000; }
.projects .next td.a { background: #80ff80; }
.jump { position: absolute; top: 26px; right: -2px; bottom: 1px; width: 17px; background: #f0f0f0; display: flex; flex-direction: column; justify-content: space-between; }

/* Scroll bars */
.hscroll { display: flex; align-items: center; justify-content: space-between; height: 16px; padding: 0 5px; background: #f0f0f0; color: #b5b5b5; }
.hscroll.live { color: #505050; margin-right: 16px; padding-left: 4px; }
.hscroll b { width: 69%; height: 16px; margin: 0 auto 0 5px; background: #cdcdcd; }
.left { transform: rotate(90deg); }
.right { transform: rotate(-90deg); }
.up { transform: rotate(180deg); }
.vscroll { grid-row: 1 / 3; grid-column: 2; margin-top: 24px; display: flex; flex-direction: column; align-items: center; gap: 5px; padding: 1px 0; background: #f0f0f0; color: #505050; }
.track { flex: 1; width: 15px; display: flex; align-items: center; }
.track b { width: 15px; height: 48px; background: #cdcdcd; }

/* Project detail */
.detail { position: relative; flex: 1; display: flex; border-top: 8px solid #f0f0f0; background: #f0f0f0; }
.sidegrip { position: absolute; left: 0; top: 281px; width: 6px; height: 120px; border-radius: 0 5px 5px 0; background: linear-gradient(#86c440, #f0ee10 50%, #86c440); }
.project { flex: 1; min-width: 0; display: flex; flex-direction: column; border: 1px solid #a0a0a0; padding: 10px 3px 2px 1px; font-family: "Liberation Sans", Arial, sans-serif; }
.flags { display: flex; align-items: center; gap: 2px; padding-left: 9px; }
.fg { display: flex; }
.fg span { width: 27px; height: 24px; margin-right: -1px; border: 1px solid #808080; background: #fff; text-align: center; line-height: 22px; font-weight: bold; }
.fg span:last-child { margin-right: 0; }
.fg .g { background: #33cc33; box-shadow: inset 0 0 0 1px #fff; }
.fg.wide { margin-left: 2px; }
.fg.wide span { width: 26px; }
.flags h2 { padding: 0 0 2px 3px; }
.tabs {
  display: grid;
  grid-template-columns: 38px 73px 38px 76px 61px 61px 90px 73px 38px 45px 94px 51px 53px 87px 45px 37px 58px 39px 91px 59px 61px 38px 46px 39px 64px 72px 134px;
  align-items: end;
  padding-left: 2px;
}
.tabs a { display: flex; gap: 4px; height: 21px; padding: 1px 0 0 4px; border: solid #d9d9d9; border-width: 1px 1px 0 0; line-height: 18px; }
.tabs a:first-child { border-left-width: 1px; padding-left: 3px; }
.tabs a.on { position: relative; height: 24px; margin: 0 0 -1px -1px; padding-left: 6px; background: #fff; border-left-width: 1px; }
.page { flex: 1; border: 1px solid #dcdcdc; background: #fff; padding: 11px 0 0 26px; }
.page h3 { padding: 0 0 7px 3px; }
.split { display: grid; grid-template-columns: 1fr 43px; }
.list { display: grid; grid-template-columns: 1fr 17px; min-width: 0; border: 1px solid #828790; padding: 1px; }
.view { overflow: hidden; min-width: 0; }
.view.upper { height: 218px; }
.view.lower { height: 228px; }

.awards td:nth-child(2) { text-align: center; }
.awards td:nth-child(1) { border-color: transparent; }
.awards th:nth-child(n+7), .awards td:nth-child(n+7) { text-align: right; }
.awards td:nth-child(2), .awards td:nth-child(3), .awards td:nth-child(7), .awards td:nth-child(8),
.awards td:nth-child(10), .awards td:nth-child(16), .awards td:nth-child(17) { border-right-color: #7d97b9; }
.awards td span { display: block; overflow: hidden; }
.awards td .ic16 { float: left; margin-right: 4px; }
.awards .sel td { background: #bfddf5; border-bottom-color: #bfddf5; }
.awards .sel td:first-child { background: #9fcbef; }
.awards .sel td.focus { background: #9fcbef; border: 1px solid #0078d7; }
.awards .off td { color: #7b8794; }
.awards td.plus { color: #008000; }

.tools { display: flex; flex-direction: column; align-items: flex-start; gap: 10px; padding: 3px 0 0 11px; }
.tools.tight { gap: 8px; }
.tools button { width: 16px; height: 18px; display: grid; place-items: center; }
.tools svg { width: 16px; height: 16px; }
.tools .pi { font-size: 8px; font-weight: bold; color: #2020d0; }
.tools .low { margin-top: 4px; margin-bottom: -4px; }

.filters { display: flex; align-items: center; height: 39px; padding: 0 43px 0 2px; gap: 3px; }
.filters > label:first-child { width: 48px; }
.combo { display: flex; align-items: center; width: 105px; height: 22px; margin-top: 2px; padding-right: 3px; border: 1px solid #adadad; background: #e1e1e1; }
.combo.first { width: 138px; }
.combo select { flex: 1; min-width: 0; height: 20px; appearance: none; border: 0; padding: 0 3px; background: none; }
.chk { display: flex; align-items: center; gap: 3px; margin-left: 3px; }
.chk input { appearance: none; width: 13px; height: 13px; margin: 0; border: 1px solid #333; background: #fff; display: grid; place-items: center; }
.chk input:checked::before { content: ""; width: 4px; height: 8px; border: solid #333; border-width: 0 1px 1px 0; transform: rotate(40deg); }
.actions { display: flex; gap: 11px; margin-left: auto; }
.btn { width: 134px; height: 23px; border: 1px solid #adadad; background: #e1e1e1; text-align: center; }
.mailrow { display: flex; align-items: center; justify-content: flex-end; gap: 12px; padding: 5px 46px 0 0; }
.mailrow span { margin-right: 18px; }
.pair { display: flex; gap: 18px; }
.pair svg { width: 16px; height: 16px; }

/* Commands */
.commands { width: 145px; padding: 3px 1px 0 2px; border-top: 1px solid #a0a0a0; }
.commands button { position: relative; display: block; width: 100%; height: 22px; padding-right: 18px; text-align: center; }
.commands .dd::after { content: ""; position: absolute; right: 1px; top: 9px; border: 4px solid transparent; border-top-color: #222; border-bottom: 0; }
.commands hr { margin: 2px 0 5px; border: 0; border-top: 1px solid #8a8a8a; }

/* Open windows */
.taskbar { display: flex; height: 24px; padding: 2px 0 2px 2px; }
.taskbar button { display: flex; align-items: center; gap: 4px; width: 120px; padding-left: 2px; border: 1px solid transparent; }
.taskbar .on { background: #cce8ff; border-color: #99d1ff; }
```
